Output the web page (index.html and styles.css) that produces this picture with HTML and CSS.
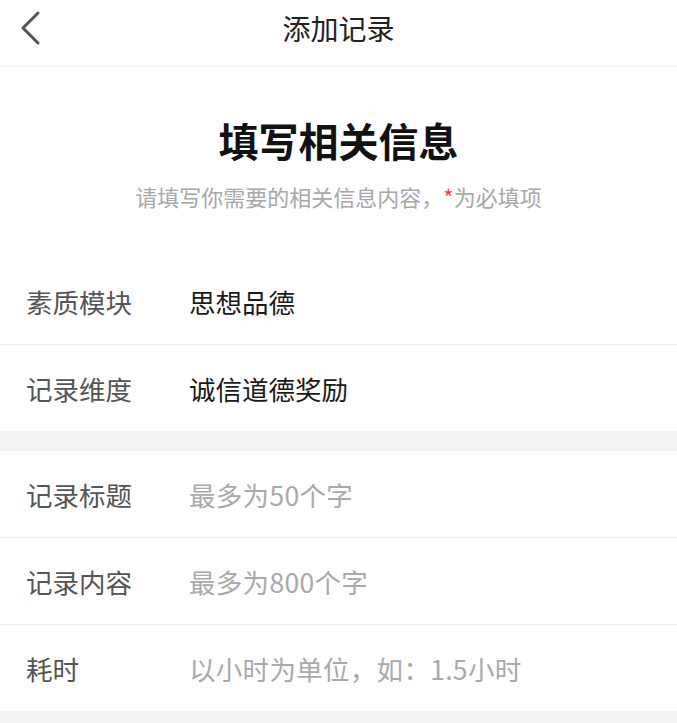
FILE: index.html
```html
<!DOCTYPE html>
<html lang="zh-CN">
<head>
<meta charset="utf-8">
<title>添加记录</title>
<link rel="stylesheet" href="styles.css">
</head>
<body>
<div class="page">
  <header class="navbar">
    <span class="back">
      <svg width="24" height="40" viewBox="0 0 24 40"><polyline points="19,5 4,20 19,35" fill="none" stroke="#555" stroke-width="3" stroke-linecap="round" stroke-linejoin="round"/></svg>
    </span>
    <h1 class="nav-title">添加记录</h1>
  </header>
  <section class="intro">
    <h2 class="heading">填写相关信息</h2>
    <p class="sub">请填写你需要的相关信息内容，<span class="req">*</span>为必填项</p>
  </section>
  <section class="group">
    <div class="row"><span class="label">素质模块</span><span class="value">思想品德</span></div>
    <div class="row last"><span class="label">记录维度</span><span class="value">诚信道德奖励</span></div>
  </section>
  <section class="group">
    <div class="row"><span class="label">记录标题</span><span class="placeholder">最多为50个字</span></div>
    <div class="row"><span class="label">记录内容</span><span class="placeholder">最多为800个字</span></div>
    <div class="row last"><span class="label">耗时</span><span class="placeholder">以小时为单位，如：1.5小时</span></div>
  </section>
</div>
</body>
</html>
```
FILE: styles.css
```css
html, body {
  margin: 0;
  padding: 0;
  background: #f4f4f4;
  font-family: "Noto Sans CJK SC", "Noto Sans", sans-serif;
}
.page {
  width: 677px;
  min-height: 723px;
  background: #f4f4f4;
}
.navbar {
  position: relative;
  height: 66px;
  background: #fdfdfd;
  border-bottom: 1px solid #f1f1f1;
  display: flex;
  align-items: center;
  justify-content: center;
}
.back {
  position: absolute;
  left: 19px;
  top: 8px;
  width: 24px;
  height: 40px;
}
.nav-title {
  margin: 0;
  font-size: 28px;
  font-weight: 400;
  color: #222;
  line-height: 56px;
  margin-top: -11px;
}
.intro {
  background: #fefefe;
  padding: 45px 0 47px;
  text-align: center;
}
.heading {
  margin: 0;
  font-size: 40px;
  line-height: 56px;
  font-weight: 700;
  color: #111;
}
.sub {
  margin: 13px 0 0;
  font-size: 22px;
  line-height: 30px;
  color: #a8a8a8;
}
.req {
  color: #e8423b;
}
.group {
  background: #fefefe;
  margin-bottom: 20px;
}
.row {
  height: 86px;
  border-bottom: 1px solid #f1f1f1;
  display: flex;
  align-items: center;
  padding-left: 26px;
}
.row.last {
  border-bottom: none;
}
.label {
  width: 163px;
  font-size: 26.5px;
  color: #555;
}
.value {
  font-size: 26.5px;
  color: #1a1a1a;
}
.placeholder {
  font-size: 26.5px;
  letter-spacing: 0.3px;
  color: #aaa;
}
```
